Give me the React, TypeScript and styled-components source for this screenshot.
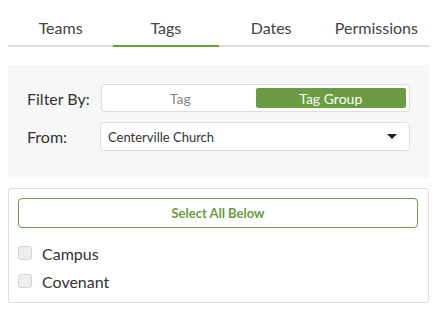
import styled, { createGlobalStyle } from "styled-components";

const GlobalStyle = createGlobalStyle`
  body {
    margin: 8px;
    background: #ffffff;
    font-family: Lato, "Open Sans", sans-serif;
    color: #333333;
  }
`;

const Tabs = styled.div`
  display: flex;
`;

const Tab = styled.div<{ $active?: boolean }>`
  flex: 1;
  text-align: center;
  font-size: 16px;
  line-height: 20px;
  padding: 10px 0 7px;
  color: #444444;
  border-bottom: 2px solid ${(p) => (p.$active ? "#6b9b43" : "#dddddd")};
`;

const FilterPanel = styled.div`
  margin-top: 18px;
  background: #f7f7f7;
  padding: 19px 19px 27px;
  display: flex;
  flex-direction: column;
  gap: 10px;
`;

const Row = styled.div`
  display: flex;
  align-items: center;
`;

const Label = styled.div`
  width: 74px;
  font-size: 16px;
  color: #333333;
`;

const Toggle = styled.div`
  flex: 1;
  height: 28px;
  box-sizing: border-box;
  background: #ffffff;
  border: 1px solid #dddddd;
  border-radius: 4px;
  padding: 3px;
  display: flex;
`;

const ToggleOption = styled.div<{ $active?: boolean }>`
  flex: 1;
  display: flex;
  align-items: center;
  justify-content: center;
  font-size: 14px;
  border-radius: 2px;
  color: ${(p) => (p.$active ? "#ffffff" : "#888888")};
  background: ${(p) => (p.$active ? "#6b9b43" : "transparent")};
`;

const Select = styled.div`
  flex: 1;
  margin-left: -1px;
  height: 29px;
  box-sizing: border-box;
  background: #ffffff;
  border: 1px solid #dddddd;
  border-radius: 4px;
  padding: 0 12px 0 7px;
  display: flex;
  align-items: center;
  justify-content: space-between;
  font-size: 13px;
  color: #333333;
`;

const Caret = styled.span`
  width: 0;
  height: 0;
  border-left: 5px solid transparent;
  border-right: 5px solid transparent;
  border-top: 5px solid #222222;
`;

const Card = styled.div`
  margin-top: 10px;
  border: 1px solid #dddddd;
  border-radius: 3px;
  padding: 9px 10px 7px 9px;
`;

const SelectAll = styled.button`
  display: block;
  width: 100%;
  height: 30px;
  background: #ffffff;
  border: 1.5px solid #6b9b43;
  border-radius: 4px;
  color: #6b9b43;
  font-family: Lato, "Open Sans", sans-serif;
  font-weight: 700;
  font-size: 13px;
  margin-bottom: 11px;
`;

const CheckRow = styled.label`
  display: flex;
  align-items: center;
  gap: 10px;
  height: 28px;
  font-size: 16px;
  color: #333333;
`;

const Box = styled.span`
  width: 14px;
  height: 14px;
  box-sizing: border-box;
  border: 1px solid #d4d4d4;
  background: #eeeeee;
  border-radius: 3px;
`;

const tabs = ["Teams", "Tags", "Dates", "Permissions"];
const options = ["Campus", "Covenant"];

export default function App() {
  return (
    <>
      <GlobalStyle />
      <Tabs>
        {tabs.map((t) => (
          <Tab key={t} $active={t === "Tags"}>
            {t}
          </Tab>
        ))}
      </Tabs>
      <FilterPanel>
        <Row>
          <Label>Filter By:</Label>
          <Toggle>
            <ToggleOption>Tag</ToggleOption>
            <ToggleOption $active>Tag Group</ToggleOption>
          </Toggle>
        </Row>
        <Row>
          <Label>From:</Label>
          <Select>
            Centerville Church
            <Caret />
          </Select>
        </Row>
      </FilterPanel>
      <Card>
        <SelectAll>Select All Below</SelectAll>
        {options.map((o) => (
          <CheckRow key={o}>
            <Box />
            {o}
          </CheckRow>
        ))}
      </Card>
    </>
  );
}
